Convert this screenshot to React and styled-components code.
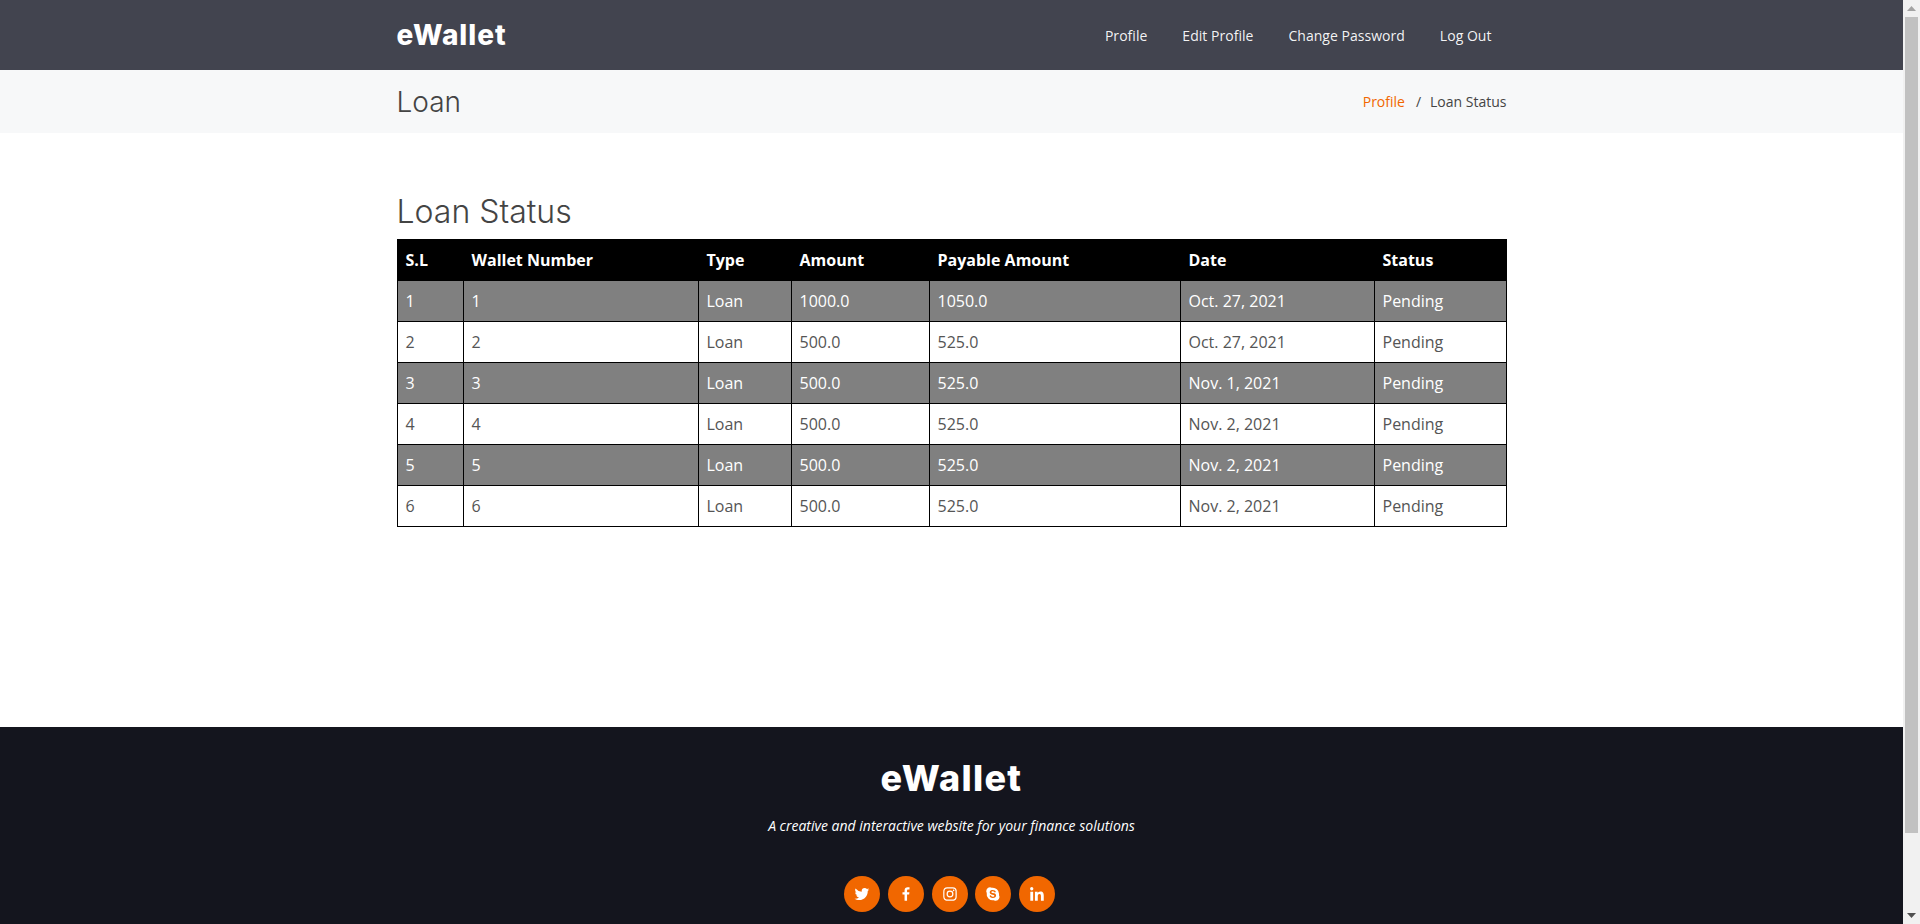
import React from "react";
import styled, { createGlobalStyle } from "styled-components";
import { BiLogoTwitter, BiLogoFacebook, BiLogoInstagram, BiLogoSkype, BiLogoLinkedin } from "react-icons/bi";

const GlobalStyle = createGlobalStyle`
    body {
        margin: 0;
        padding-right: 17px;
        font-family: "Open Sans", "Liberation Sans", sans-serif;
        font-size: 16px;
        color: #444444;
        background: #fff;
    }
    * {
        box-sizing: border-box;
    }
`;

// the browser scrollbar of the page, drawn because the headless window hides it
const ScrollLane = styled.aside`
    position: fixed;
    top: 0;
    right: 0;
    width: 17px;
    height: 100vh;
    background: #f1f1f1;
    display: flex;
    flex-direction: column;
    align-items: center;
    justify-content: space-between;
`;

const ScrollTop = styled.div`
    display: flex;
    flex-direction: column;
    align-items: center;
`;

const ScrollArrow = styled.svg`
    display: block;
    width: 17px;
    height: 17px;
`;

const ScrollThumb = styled.div`
    width: 13px;
    height: 816px;
    background: #c1c1c1;
`;

const Container = styled.div`
    width: 1140px;
    margin: 0 auto;
    padding: 0 15px;
    display: flex;
    align-items: center;
    justify-content: space-between;
`;

const Header = styled.header`
    height: 70px;
    background: #42444f;
    display: flex;
    align-items: center;
`;

const Logo = styled.a`
    font-family: Inter, "Open Sans", sans-serif;
    font-size: 28px;
    font-weight: 800;
    letter-spacing: 1px;
    color: #fff;
`;

const Nav = styled.nav`
    display: flex;
    gap: 35px;
    padding-right: 15px;
`;

const NavLink = styled.a`
    font-size: 14px;
    font-weight: 500;
    letter-spacing: 0.03px;
    color: rgba(255, 255, 255, 0.95);
`;

const Breadcrumbs = styled.section`
    height: 63px;
    background: #f7f8f9;
    display: flex;
    align-items: center;
`;

const PageTitle = styled.h2`
    margin: 0;
    font-family: Inter, "Open Sans", sans-serif;
    font-size: 28px;
    font-weight: 300;
    color: #444444;
`;

const Trail = styled.ol`
    display: flex;
    margin: 0;
    padding: 0;
    list-style: none;
    font-size: 14px;
`;

const Crumb = styled.li`
    color: ${(p) => (p.$active ? "#f16700" : "#444444")};
    li + &::before {
        content: "/";
        padding: 0 9px 0 11px;
        color: #444444;
    }
`;

const Main = styled.main`
    height: 594px;
    padding-top: 59px;
`;

const Content = styled.div`
    width: 1140px;
    margin: 0 auto;
    padding: 0 15px;
`;

const SectionTitle = styled.h3`
    margin: 0 0 8px;
    font-family: Inter, "Open Sans", sans-serif;
    font-size: 32px;
    line-height: 39px;
    font-weight: 300;
    color: #444444;
`;

const Table = styled.table`
    width: 1109px;
    table-layout: fixed;
    border-collapse: collapse;
`;

const HeadRow = styled.tr`
    background: #000;
    color: #fff;
`;

const Row = styled.tr`
    background: ${(p) => (p.$shaded ? "gray" : "#fff")};
    color: ${(p) => (p.$shaded ? "#fff" : "#555555")};
`;

const HeadCell = styled.th`
    padding: 8px;
    height: 41px;
    text-align: left;
    font-weight: 700;
    line-height: 24px;
    border: 1px solid #000;
`;

const Cell = styled.td`
    padding: 8px;
    height: 41px;
    line-height: 24px;
    border: 1px solid #000;
`;

const Footer = styled.footer`
    height: 197px;
    padding-top: 30px;
    background: #14151e;
    color: #fff;
    text-align: center;
`;

const FooterLogo = styled.h3`
    margin: 0 0 15px;
    font-family: Inter, "Open Sans", sans-serif;
    font-size: 36px;
    line-height: 43px;
    font-weight: 800;
    letter-spacing: 1.3px;
    color: #fff;
`;

const Tagline = styled.p`
    margin: 0 0 40px;
    font-size: 14px;
    line-height: 21px;
    font-style: italic;
`;

const Socials = styled.div`
    display: flex;
    justify-content: center;
    gap: 7.75px;
    padding-right: 4px;
`;

const SocialLink = styled.a`
    width: 36px;
    height: 36px;
    border-radius: 50%;
    background: #f16700;
    color: #fff;
    font-size: 18px;
    display: flex;
    align-items: center;
    justify-content: center;
`;

const columns = [66, 235, 93, 138, 251, 194, 132];
const headings = ["S.L", "Wallet Number", "Type", "Amount", "Payable Amount", "Date", "Status"];

const loans = [
    { id: 1, wallet: 1, type: "Loan", amount: "1000.0", payable: "1050.0", date: "Oct. 27, 2021", status: "Pending" },
    { id: 2, wallet: 2, type: "Loan", amount: "500.0", payable: "525.0", date: "Oct. 27, 2021", status: "Pending" },
    { id: 3, wallet: 3, type: "Loan", amount: "500.0", payable: "525.0", date: "Nov. 1, 2021", status: "Pending" },
    { id: 4, wallet: 4, type: "Loan", amount: "500.0", payable: "525.0", date: "Nov. 2, 2021", status: "Pending" },
    { id: 5, wallet: 5, type: "Loan", amount: "500.0", payable: "525.0", date: "Nov. 2, 2021", status: "Pending" },
    { id: 6, wallet: 6, type: "Loan", amount: "500.0", payable: "525.0", date: "Nov. 2, 2021", status: "Pending" },
];

const socials = [BiLogoTwitter, BiLogoFacebook, BiLogoInstagram, BiLogoSkype, BiLogoLinkedin];

export default function App() {
    return (
        <>
            <GlobalStyle />
            <Header>
                <Container>
                    <Logo>eWallet</Logo>
                    <Nav>
                        <NavLink>Profile</NavLink>
                        <NavLink>Edit Profile</NavLink>
                        <NavLink>Change Password</NavLink>
                        <NavLink>Log Out</NavLink>
                    </Nav>
                </Container>
            </Header>
            <Breadcrumbs>
                <Container>
                    <PageTitle>Loan</PageTitle>
                    <Trail>
                        <Crumb $active>Profile</Crumb>
                        <Crumb>Loan Status</Crumb>
                    </Trail>
                </Container>
            </Breadcrumbs>
            <Main>
                <Content>
                    <SectionTitle>Loan Status</SectionTitle>
                    <Table>
                        <colgroup>
                            {columns.map((w, i) => (
                                <col key={i} width={w} />
                            ))}
                        </colgroup>
                        <thead>
                            <HeadRow>
                                {headings.map((h) => (
                                    <HeadCell key={h}>{h}</HeadCell>
                                ))}
                            </HeadRow>
                        </thead>
                        <tbody>
                            {loans.map((loan, i) => (
                                <Row key={loan.id} $shaded={i % 2 === 0}>
                                    <Cell>{loan.id}</Cell>
                                    <Cell>{loan.wallet}</Cell>
                                    <Cell>{loan.type}</Cell>
                                    <Cell>{loan.amount}</Cell>
                                    <Cell>{loan.payable}</Cell>
                                    <Cell>{loan.date}</Cell>
                                    <Cell>{loan.status}</Cell>
                                </Row>
                            ))}
                        </tbody>
                    </Table>
                </Content>
            </Main>
            <Footer>
                <FooterLogo>eWallet</FooterLogo>
                <Tagline>A creative and interactive website for your finance solutions</Tagline>
                <Socials>
                    {socials.map((Icon, i) => (
                        <SocialLink key={i}>
                            <Icon />
                        </SocialLink>
                    ))}
                </Socials>
            </Footer>
            <ScrollLane>
                <ScrollTop>
                    <ScrollArrow viewBox="0 0 17 17">
                        <path d="M8.5 6 L13 11 L4 11 Z" fill="#a3a3a3" />
                    </ScrollArrow>
                    <ScrollThumb />
                </ScrollTop>
                <ScrollArrow viewBox="0 0 17 17">
                    <path d="M4 6 L13 6 L8.5 11 Z" fill="#505050" />
                </ScrollArrow>
            </ScrollLane>
        </>
    );
}
